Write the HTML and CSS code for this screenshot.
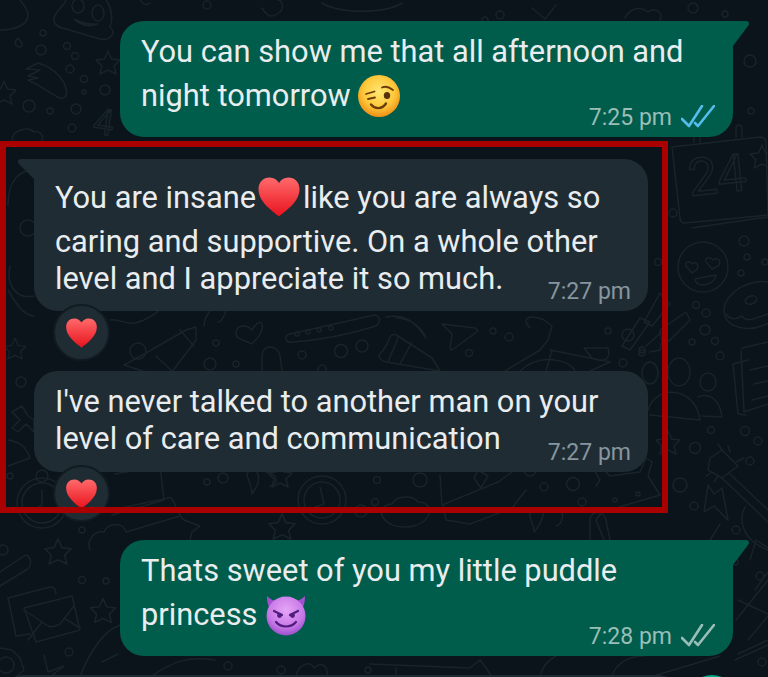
FILE: index.html
```html
<!DOCTYPE html>
<html lang="en">

<head>
    <meta charset="UTF-8">
    <meta name="viewport" content="width=device-width, initial-scale=1.0">
    <title>Chat</title>
    <link rel="stylesheet" href="styles.css">
</head>

<body>
    <!-- gradients and emoji shared by the bubbles -->
    <svg class="defs" width="0" height="0" aria-hidden="true">
        <defs>
            <linearGradient id="heartFill" x1="0" y1="0" x2="0" y2="1">
                <stop offset="0" stop-color="#ff6a6c" />
                <stop offset="1" stop-color="#e8121c" />
            </linearGradient>
            <radialGradient id="winkFill" cx="0.5" cy="0.4" r="0.62">
                <stop offset="0" stop-color="#ffe873" />
                <stop offset="0.6" stop-color="#fdc83a" />
                <stop offset="1" stop-color="#ee8a12" />
            </radialGradient>
            <radialGradient id="devilFill" cx="0.5" cy="0.35" r="0.7">
                <stop offset="0" stop-color="#e6a6f7" />
                <stop offset="0.65" stop-color="#c777e6" />
                <stop offset="1" stop-color="#8f45c4" />
            </radialGradient>
            <symbol id="heart" viewBox="0 0 42 40">
                <path fill="url(#heartFill)" d="M21 39.500C14 33.500.5 25 .5 12 .5 5 5.500.5 11.500.5c4.500 0 7.500 2.200 9.500 5.500 2-3.300 5-5.500 9.500-5.500 6 0 11 4.500 11 11.500 0 13-13.500 21.500-20.500 27.500z" />
            </symbol>
            <path id="star" d="M0-12 3.500-4 12-3 6 3 8 11 0 7-8 11-6 3-12-3-3.500-4z" />
        </defs>
    </svg>

    <!-- doodle wallpaper -->
    <svg class="wallpaper" viewBox="0 0 768 677" aria-hidden="true">
        <!-- top left -->
        <path d="M0 30C15 30 28 25 28 15 28 8 22 3 20 0" />
        <path d="M66 0C64 6 52 14 54 21 55 26 60 28 66 29L100 39C112 41 116 32 110 27 113 20 112 8 106 0" />
        <ellipse cx="78" cy="6" rx="6" ry="7" />
        <ellipse cx="98" cy="13" rx="6" ry="8" />
        <path d="M74 19Q85 29 97 24 85 25 74 19z" />
        <path d="M18 38C14 42 14 46 20 47 24 46 22 42 18 38z" />
        <path d="M28 80C40 85 52 95 60 98 70 100 68 85 58 75 52 68 45 65 38 63L26 69 40 70 28 76 38 78z" />
        <circle cx="43" cy="33" r="3" />
        <circle cx="41" cy="50" r="5" />
        <circle cx="67" cy="46" r="3.500" />
        <circle cx="75" cy="56" r="3.500" />
        <circle cx="70" cy="69" r="4" />
        <circle cx="84" cy="79" r="3.500" />
        <circle cx="84" cy="92" r="2" />
        <circle cx="105" cy="90" r="5" />
        <circle cx="76" cy="109" r="5" />
        <circle cx="29" cy="106" r="6" />
        <circle cx="50" cy="111" r="3" />
        <circle cx="72" cy="128" r="4" />
        <use href="#star" transform="translate(108 63)" />
        <use href="#star" transform="translate(4 93)" />
        <text class="doodle-digit" x="92" y="133" transform="rotate(8 92 133)">4</text>
        <path d="M12 140C12 130 28 126 34 132 40 130 44 136 42 141" />

        <!-- top edge -->
        <path d="M140 0C142 4 146 6 150 3" />
        <circle cx="207" cy="5" r="4" />
        <path d="M262 8C268 18 272 18 280 12 286 6 280 0 278 0" />
        <path d="M322 3C340 14 385 14 402 3" />
        <circle cx="485" cy="20" r="3" />
        <circle cx="500" cy="15" r="4" />
        <path d="M532 8 545 19 556 5" />
        <path d="M625 18C630 8 640 6 648 12 656 6 664 14 660 20" />
        <circle cx="693" cy="8" r="5" />
        <circle cx="725" cy="14" r="3" />
        <circle cx="750" cy="61" r="6" />
        <circle cx="751" cy="111" r="3" />
        <use href="#star" transform="translate(762 157)" />

        <!-- left side, inside the red box -->
        <path d="M8 205C8 180 20 170 34 170" />
        <circle cx="28" cy="228" r="8" />
        <path d="M10 266C6 282 14 300 34 296" />
        <path d="M8 290C14 300 22 315 34 316" />
        <use href="#star" transform="translate(15 349) scale(.9)" />
        <circle cx="21" cy="382" r="5" />
        <path d="M12 412 20 420 12 428 18 432 26 424 34 432 34 420 28 416 22 406z" />
        <path d="M8 440C24 442 28 452 30 458L8 466" />
        <circle cx="10" cy="476" r="3" />
        <circle cx="42" cy="476" r="6" />
        <circle cx="42" cy="503" r="25" />
        <circle cx="42" cy="503" r="20" />
        <path d="M42 490V505L34 510" />

        <!-- strip between first reaction and second bubble -->
        <path d="M110 320C122 318 126 328 144 320 152 316 156 314 158 311" />
        <path d="M146 353 186 330 196 327 196 340 172 372H146L124 365z" />
        <path d="M180 330 194 346" />
        <path d="M156 356 172 371" />
        <circle cx="138" cy="351" r="8" />
        <circle cx="216" cy="343" r="3" />
        <circle cx="210" cy="364" r="6" />
        <circle cx="236" cy="364" r="3" />
        <path d="M210 311C206 316 204 320 204 326M226 311C224 316 222 322 218 322" />
        <path d="M236 334C236 322 250 326 252 330 258 320 264 320 262 330 260 336 256 340 252 344 246 340 236 340 236 334z" />
        <path d="M290 334 370 316C380 312 382 322 376 326 350 334 320 340 294 342 284 344 284 334 290 334z" />
        <circle cx="297" cy="334" r="2" />
        <circle cx="308" cy="332" r="2" />
        <circle cx="319" cy="330" r="2" />
        <circle cx="331" cy="328" r="2" />
        <path d="M262 371V356C262 344 278 344 280 356L282 371" />
        <circle cx="302" cy="355" r="4" />
        <circle cx="341" cy="351" r="6.500" />
        <circle cx="362" cy="346" r="6" />
        <circle cx="322" cy="369" r="4" />
        <path d="M386 317C410 312 420 330 426 338 424 332 414 318 396 318" />
        <path d="M442 324 475 328 478 331 452 350C448 350 452 340 452 334z" />
        <circle cx="469" cy="353" r="3.500" />
        <path d="M387 344 382 352C376 356 380 360 386 362L440 371 432 358 398 336C392 332 390 336 387 344z" />
        <path d="M398 338 388 362M412 342 400 364" />
        <circle cx="493" cy="331" r="3" />
        <circle cx="509" cy="337" r="4" />
        <path d="M520 371C540 352 570 360 575 371" />
        <path d="M530 328C520 318 530 314 544 320L552 326 548 340 540 350 505 371" />
        <path d="M550 350 610 362 590 371M546 371 552 350" />
        <path d="M592 348H608C612 362 600 362 592 358L584 348z" />
        <circle cx="608" cy="331" r="3" />
        <circle cx="628" cy="335" r="6" />
        <circle cx="642" cy="353" r="3" />
        <circle cx="623" cy="363" r="4" />
        <path d="M640 318 650 322 630 350 622 346zM646 346 664 330 660 350 650 352" />

        <!-- strip between second reaction and last bubble -->
        <path d="M115 474 160 466 164 500 112 515" />
        <path d="M112 510 168 498C174 494 176 514 184 520L200 526 192 532 190 540" />
        <path d="M126 532 180 516" />
        <circle cx="207" cy="482" r="3" />
        <circle cx="223" cy="478" r="5" />
        <path d="M248 478C244 470 256 468 258 474 260 482 256 488 252 494 252 488 250 484 248 478z" />
        <path d="M266 472C272 474 276 474 276 482 274 484 272 486 270 486" />
        <circle cx="322" cy="500" r="24" />
        <circle cx="322" cy="500" r="18" />
        <path d="M320 487 324 504 312 508" />
        <use href="#star" transform="translate(280 476)" />
        <use href="#star" transform="translate(282 527) scale(1.100)" />
        <circle cx="377" cy="480" r="3.500" />
        <circle cx="420" cy="480" r="7" />
        <path d="M385 520C378 512 382 505 392 504 396 496 412 494 418 502 428 502 432 510 428 516 420 530 395 530 385 520z" />
        <circle cx="375" cy="502" r="3.500" />
        <circle cx="361" cy="511" r="6" />
        <path d="M440 475 442 505 498 482 512 472" />
        <path d="M443 505 446 520 470 524 512 508 526 490" />
        <path d="M478 470 474 478 481 488 488 476z" />
        <circle cx="530" cy="470" r="6" />
        <circle cx="544" cy="487" r="4" />
        <circle cx="573" cy="484" r="6.500" />
        <circle cx="582" cy="502" r="4" />
        <path d="M530 516C530 508 540 506 544 512 542 520 538 528 534 532 534 524 530 520 530 516z" />
        <path d="M552 508C560 506 564 512 562 520 560 524 558 526 556 526" />
        <path d="M596 486 600 480 594 470 598 464 610 476 640 472 646 458 652 462 648 476 660 495 602 512 596 520 604 540" />
        <circle cx="615" cy="500" r="2" />
        <circle cx="638" cy="494" r="2" />
        <path d="M590 540V520C590 510 604 510 606 520L610 540" />

        <!-- under the red box, left -->
        <circle cx="82" cy="530" r="3" />
        <path d="M90 550C86 540 95 530 104 532 108 522 124 522 126 532" />
        <use href="#star" transform="translate(58 552) scale(1.100)" />
        <circle cx="82" cy="580" r="3.500" />
        <circle cx="106" cy="581" r="3" />
        <use href="#star" transform="translate(103 611) scale(1.050)" />
        <circle cx="3" cy="550" r="5" />
        <path d="M0 572 24 556C30 552 34 566 26 570L0 586" />
        <path d="M8 598 50 587C54 587 56 590 56 594" />
        <path d="M8 598 16 636 30 634" />
        <path d="M24 608 72 596 80 630 36 642z" />
        <path d="M24 610 48 626C52 628 56 626 60 624L74 606" />
        <path d="M42 622 28 640M64 618 80 628" />
        <circle cx="69" cy="652" r="4" />
        <circle cx="6" cy="665" r="8" />
        <path d="M0 648 12 650 20 658 24 670 16 677" />
        <path d="M44 655 48 672 64 666 50 677" />
        <path d="M80 677C90 650 105 630 120 625" />
        <path d="M102 662 118 654" />

        <!-- under the last bubble -->
        <path d="M150 677C175 660 190 656 215 660" />
        <circle cx="228" cy="666" r="4" />
        <circle cx="281" cy="670" r="4" />
        <path d="M296 677C298 664 310 660 314 668 322 660 330 668 326 677" />
        <path d="M370 664 470 668 480 660 486 668 492 677M396 677V668" />
        <circle cx="368" cy="670" r="3" />
        <path d="M540 677C542 668 548 660 556 656" />
        <path d="M612 677C615 664 628 656 644 656" />
        <path d="M650 677 720 656" />
        <path d="M735 660 768 645" />

        <!-- right column -->
        <path d="M672 147 760 137C764 137 766 140 766 144L768 215 685 223C682 223 680 221 680 218z" />
        <path d="M692 228 768 217" />
        <path d="M694 142V132C694 128 700 128 700 132V142M736 137V128C736 124 742 124 742 128V137" />
        <text class="doodle-digit doodle-digit-lg" x="690" y="196" transform="rotate(-6 690 196)">24</text>
        <circle cx="673" cy="213" r="4" />
        <circle cx="744" cy="241" r="5" />
        <circle cx="747" cy="257" r="3" />
        <circle cx="741" cy="273" r="3" />
        <circle cx="765" cy="262" r="3" />
        <circle cx="658" cy="262" r="3.500" />
        <circle cx="703" cy="267" r="25" />
        <path d="M686 266C684 262 690 260 692 264 696 260 700 266 696 270L692 273z" />
        <path d="M706 262C704 258 710 256 713 260 718 256 722 262 718 266L712 269z" />
        <path d="M695 279 716 275C716 284 696 290 695 279z" />
        <ellipse cx="755" cy="305" rx="32" ry="22" transform="rotate(-20 755 305)" />
        <ellipse cx="751" cy="300" rx="6" ry="4" transform="rotate(-20 751 300)" />
        <path d="M726 314C732 322 738 318 742 316 746 322 752 320 768 314" />
        <circle cx="696" cy="305" r="3.500" />
        <circle cx="706" cy="313" r="4" />
        <circle cx="705" cy="330" r="5" />
        <circle cx="692" cy="342" r="3" />
        <circle cx="715" cy="341" r="3.500" />
        <circle cx="720" cy="356" r="4" />
        <path d="M644 322 660 293 670 304 652 326zM660 330 686 312 690 320 670 340 662 344z" />
        <circle cx="642" cy="350" r="3" />
        <ellipse cx="679" cy="372" rx="11" ry="14" />
        <ellipse cx="708" cy="382" rx="8" ry="9" />
        <ellipse cx="650" cy="373" rx="8" ry="11" />
        <path d="M648 410C655 385 695 385 700 420L650 415" />
        <path d="M698 397C710 392 720 400 722 417L702 416" />
        <path d="M742 348 768 342M750 370 768 366M754 384 768 381M752 400 768 396" />
        <path d="M741 350 744 412 768 404M733 364 748 360M733 364 738 414 746 415" />
        <circle cx="711" cy="430" r="3.500" />
        <circle cx="695" cy="448" r="5.500" />
        <circle cx="745" cy="431" r="4.500" />
        <circle cx="758" cy="441" r="4" />
        <circle cx="750" cy="461" r="4" />
        <circle cx="680" cy="485" r="7" />
        <circle cx="694" cy="506" r="4" />
        <use href="#star" transform="translate(668 443)" />
        <path d="M710 458 722 450 738 466 722 478 708 470z" />
        <path d="M722 450 718 444M730 452 728 446M736 462 744 458M712 472 706 476M718 476 714 482" />
        <path d="M730 474 768 510M722 478 768 522" />
        <path d="M708 485 714 494 722 488 728 520 714 506 704 512z" />
        <path d="M745 507C738 520 742 540 768 550" />
        <path d="M720 524 710 540" />
        <circle cx="736" cy="530" r="4" />
        <path d="M750 560 756 540 768 548M768 572 755 590" />
        <circle cx="760" cy="576" r="4" />
        <circle cx="735" cy="562" r="3" />
        <path d="M738 600 768 614M736 620 768 580" />
        <path d="M748 640 768 616M738 654 768 640" />
        <circle cx="762" cy="662" r="4" />
    </svg>

    <div class="chat">
        <div class="bubble bubble-out bubble-tall">
            <p class="text">You can show me that all afternoon and night tomorrow
                <svg class="emoji emoji-wink" viewBox="0 0 42 42" aria-hidden="true">
                    <circle cx="21" cy="21" r="21" fill="url(#winkFill)" />
                    <g fill="none" stroke="#6b3d0a" stroke-width="1.800" stroke-linecap="round">
                        <path d="M8 19 16.500 16.500M10 24 17 22.500" />
                        <path d="M24 12.500C27 11 31 12 35 15" />
                        <path d="M13 29.500C17 34.500 24 34.500 28 28.500" stroke-width="2.400" />
                    </g>
                    <ellipse cx="29" cy="20.500" rx="3.200" ry="3.600" fill="#5a3208" />
                </svg>
            </p>
            <div class="meta"><span>7:25 pm</span>
                <svg class="ticks ticks-read" viewBox="0 0 34 24" aria-hidden="true">
                    <path d="M1 14 8 21 21 1M14 18 17 21 33 1" />
                </svg>
            </div>
        </div>

        <div class="highlight">
            <div class="bubble bubble-in bubble-tall-in">
                <p class="text">You are insane<svg class="emoji-heart" aria-hidden="true"><use href="#heart" /></svg>like you are always so caring and supportive. On a whole other level and I appreciate it so much.</p>
                <div class="meta"><span>7:27 pm</span></div>
                <div class="reaction"><svg class="reaction-heart" aria-hidden="true"><use href="#heart" /></svg></div>
            </div>
            <div class="bubble bubble-next">
                <p class="text">I've never talked to another man on your level of care and communication</p>
                <div class="meta"><span>7:27 pm</span></div>
                <div class="reaction"><svg class="reaction-heart" aria-hidden="true"><use href="#heart" /></svg></div>
            </div>
        </div>

        <div class="bubble bubble-out bubble-last bubble-tall">
            <p class="text">Thats sweet of you my little puddle princess
                <svg class="emoji emoji-devil" viewBox="0 0 42 42" aria-hidden="true">
                    <path d="M2 2C2 10 4 15 8 18L15 8C10 7 6 6 2 2zM40 2C40 10 38 15 34 18L27 8C32 7 36 6 40 2z" fill="#a34fd0" />
                    <circle cx="21" cy="22" r="19.500" fill="url(#devilFill)" />
                    <g fill="none" stroke="#4e1d7f" stroke-width="2.200" stroke-linecap="round">
                        <path d="M9 17 17 21M33 17 25 21" />
                        <path d="M11 28C16 34 26 34 31 28" />
                    </g>
                    <circle cx="14.500" cy="21.500" r="2.400" fill="#4e1d7f" />
                    <circle cx="27.500" cy="21.500" r="2.400" fill="#4e1d7f" />
                </svg>
            </p>
            <div class="meta"><span>7:28 pm</span>
                <svg class="ticks" viewBox="0 0 34 24" aria-hidden="true">
                    <path d="M1 14 8 21 21 1M14 18 17 21 33 1" />
                </svg>
            </div>
        </div>

        <div class="composer">
            <div class="composer-box"></div>
            <div class="composer-send"></div>
        </div>
    </div>
</body>

</html>
```

FILE: styles.css
```css
body {
    margin: 0;
    height: 677px;
    overflow: hidden;
    position: relative;
    background-color: #0a141a;
    font-family: Roboto, "Liberation Sans", sans-serif;
}

.defs {
    position: absolute;
}

.wallpaper {
    position: absolute;
    top: 0;
    left: 0;
    width: 768px;
    height: 677px;
    fill: none;
    stroke: #18232a;
    stroke-width: 1.500;
    stroke-linejoin: round;
    stroke-linecap: round;
}

.doodle-digit {
    font-family: Roboto, sans-serif;
    font-size: 36px;
    font-weight: 400;
}

.doodle-digit-lg {
    font-size: 52px;
}

.chat {
    position: relative;
    box-sizing: border-box;
    height: 677px;
    overflow: hidden;
    padding-top: 21px;
}

.bubble {
    position: relative;
    display: grid;
    box-sizing: border-box;
    width: 614px;
    padding: 0 21px;
    background-color: #202c33;
    border-radius: 24px;
    color: #e9edef;
}

.bubble > * {
    grid-area: 1 / 1;
}

.bubble-out {
    margin-left: 120px;
    width: 613px;
    height: 116px;
    padding-top: 9px;
    background-color: #005c4b;
    border-top-right-radius: 0;
}

.bubble-out::before {
    content: "";
    position: absolute;
    top: 0;
    left: 100%;
    width: 17px;
    height: 25px;
    background-color: #005c4b;
    clip-path: path("M0 0H13C16 0 17 3 15 5L0 25Z");
}

.bubble-last {
    margin-top: 27px;
}

.bubble-in {
    height: 152px;
    padding-top: 18px;
    border-top-left-radius: 0;
}

.bubble-in::before {
    content: "";
    position: absolute;
    top: 0;
    right: 100%;
    width: 16px;
    height: 20px;
    background-color: #202c33;
    clip-path: path("M16 0H3C0 0-1 3 1 5L16 20Z");
}

.bubble-next {
    height: 101px;
    margin-top: 60px;
    padding-top: 12px;
}

.text {
    margin: 0;
    font-size: 30.800px;
    line-height: 37px;
}

.bubble-out .text {
    line-height: 44px;
}

.meta {
    display: flex;
    align-items: center;
    gap: 9px;
    justify-self: end;
    align-self: end;
    margin: 0 -4px 5px 0;
    font-size: 23px;
    line-height: 28px;
    color: #8696a0;
}

.bubble-out .meta {
    margin-right: -3px;
    color: #99beb7;
}

.ticks {
    width: 34px;
    height: 24px;
    margin-top: -3px;
    fill: none;
    stroke: #99beb7;
    stroke-width: 2.600;
    stroke-linecap: round;
    stroke-linejoin: round;
}

.ticks-read {
    stroke: #53bdeb;
}

.emoji {
    width: 42px;
    height: 42px;
    vertical-align: -11px;
}

.emoji-heart {
    width: 42px;
    height: 40px;
    margin: 0 3px 6px 2px;
    vertical-align: -15px;
}

.highlight {
    position: relative;
    margin-top: 4px;
    width: 668px;
    height: 372px;
    padding: 18px 0 0 34px;
    box-sizing: border-box;
}

/* frame is drawn over the reactions */
.highlight::after {
    content: "";
    position: absolute;
    top: 0;
    left: 0;
    right: 0;
    bottom: 0;
    border: 6px solid #ab0000;
    pointer-events: none;
}

.reaction {
    grid-area: auto;
    position: absolute;
    top: calc(100% - 7px);
    left: 19px;
    display: flex;
    align-items: center;
    justify-content: center;
    width: 57px;
    height: 57px;
    box-sizing: border-box;
    background-color: #202c33;
    border: 2px solid #111b21;
    border-radius: 50%;
}

.reaction-heart {
    width: 33px;
    height: 30px;
}

.composer {
    display: flex;
    gap: 6px;
    margin: 19px 32px 0 0;
}

.composer-box {
    flex: 1;
    height: 48px;
    background-color: #1f2c33;
    border-radius: 24px;
}

.composer-send {
    width: 48px;
    height: 48px;
    background-color: #00a884;
    border-radius: 50%;
}
```
